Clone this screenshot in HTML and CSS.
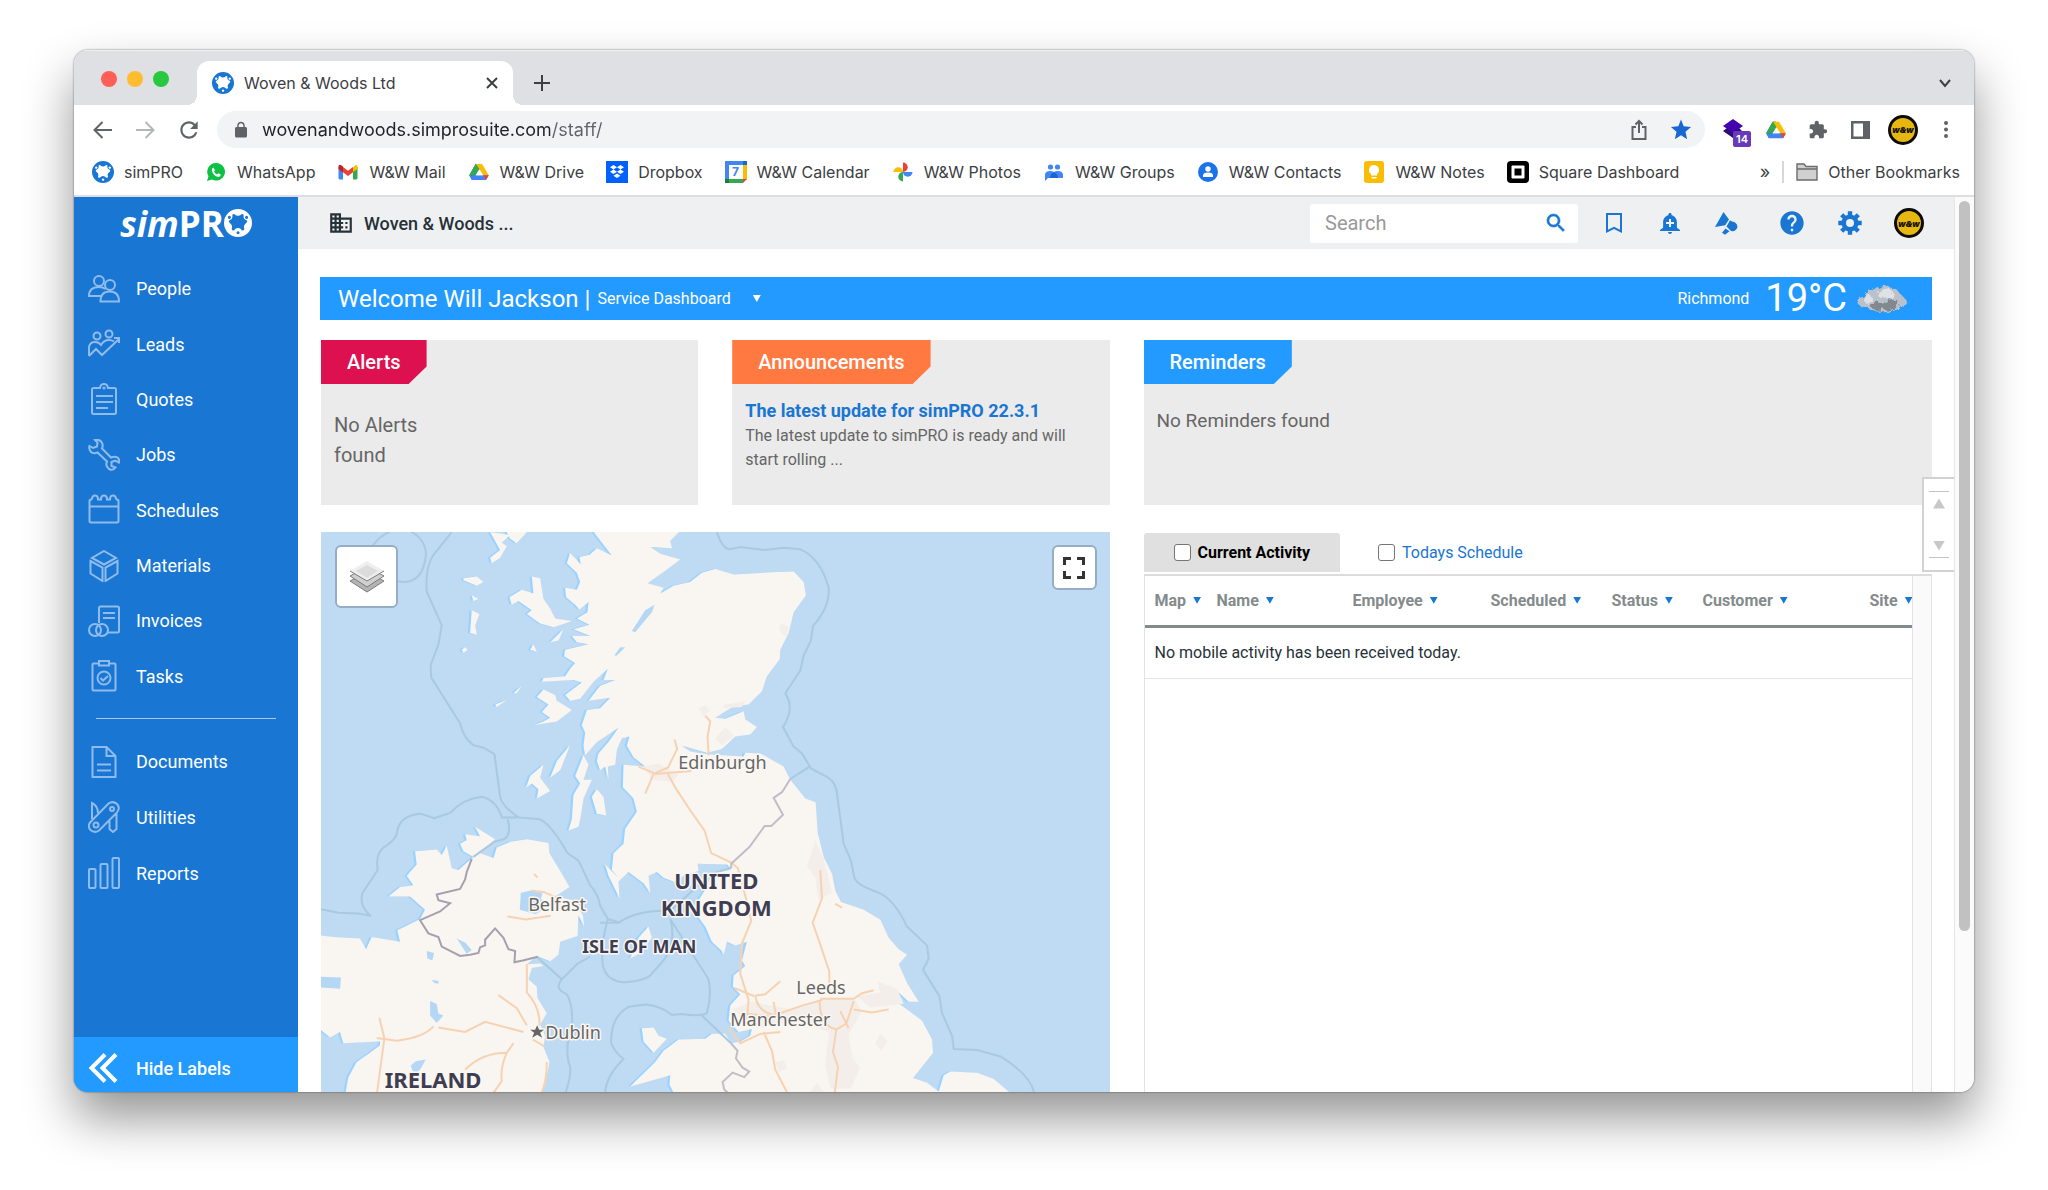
FILE: index.html
```
<!DOCTYPE html>
<html lang="en">
<head>
<meta charset="utf-8">
<title>Woven &amp; Woods Ltd</title>
<link rel="stylesheet" href="styles.css">
</head>
<body>
<svg class="defs" aria-hidden="true">
  <symbol id="ring" viewBox="0 0 22 22">
    <path fill="currentColor" fill-rule="evenodd" d="M11 0a11 11 0 1 0 0 22a11 11 0 1 0 0-22zM8.200 4.200Q7 3.600 6.600 4.800Q7 8 4.800 8.600Q3.200 9 3.900 10.300L6 12.600Q6.800 14 6 15.800Q6.300 17.300 8 16.600Q9 15 11 15Q13 15 14 16.600Q15.700 17.300 16 15.800Q15.200 14 16 12.600L18.100 10.300Q18.800 9 17.200 8.600Q15 8 15.400 4.800Q15 3.600 13.800 4.200Q11 6.600 8.200 4.200zM4.200 5.400a1.200 1.200 0 1 0 .1 0zM17.700 5.400a1.200 1.200 0 1 0 .1 0zM11 17.400a1.200 1.200 0 1 0 .1 0z"/>
  </symbol>
  <symbol id="drive" viewBox="0 0 22 20">
    <path fill="#188038" d="M7.300 1h3.700l1.800 3.200L5 17.500 3.200 19 .2 13.600z"/>
    <path fill="#34a853" d="M7.300 1H11l2 3.400L7.800 13.600H.2z"/>
    <path fill="#fbbc04" d="M7.800 1h6.600l7.400 12.600h-6z"/>
    <path fill="#4285f4" d="M.2 13.600h21.600L18.800 19H3.200z"/>
    <path fill="#ea4335" d="M15.600 13.600h6.200L18.800 19z"/>
    <path fill="#fff" d="M11 7.400l3.700 6.200H7.300z"/>
  </symbol>
</svg>

<div class="window">
  <header class="tabs">
    <div class="lights"><i class="light red"></i><i class="light amber"></i><i class="light green"></i></div>
    <div class="tab">
      <svg class="i22 brand"><use href="#ring"/></svg>
      <span class="tab-title">Woven &amp; Woods Ltd</span>
      <button class="bare" aria-label="Close tab"><svg class="i16" viewBox="0 0 16 16"><path class="ln" d="M3 3l10 10M13 3L3 13"/></svg></button>
    </div>
    <button class="bare new-tab" aria-label="New tab"><svg class="i18" viewBox="0 0 18 18"><path class="ln" d="M9 1v16M1 9h16"/></svg></button>
    <button class="bare more-tabs" aria-label="Search tabs"><svg class="i16" viewBox="0 0 16 16"><path class="ln" d="M3 5l5 6 5-6"/></svg></button>
  </header>

  <div class="toolbar">
    <button class="bare" aria-label="Back"><svg class="i22" viewBox="0 0 22 22"><path class="ln grey" d="M20 11H3M10.500 3L2.500 11l8 8"/></svg></button>
    <button class="bare" aria-label="Forward"><svg class="i22" viewBox="0 0 22 22"><path class="ln pale" d="M2 11h17M11.500 3l8 8-8 8"/></svg></button>
    <button class="bare" aria-label="Reload"><svg class="i26" viewBox="0 0 24 24"><path fill="#5f6368" d="M17.650 6.350C16.200 4.900 14.210 4 12 4c-4.420 0-7.990 3.580-7.990 8s3.570 8 7.990 8c3.730 0 6.840-2.550 7.730-6h-2.080c-.82 2.330-3.040 4-5.650 4-3.310 0-6-2.690-6-6s2.690-6 6-6c1.660 0 3.140.69 4.220 1.780L13 11h7V4l-2.350 2.350z"/></svg></button>
    <form class="omnibox">
      <svg class="i18" viewBox="0 0 24 24"><path fill="#5f6368" fill-rule="evenodd" d="M18 8h-1V6c0-2.760-2.240-5-5-5S7 3.240 7 6v2H6c-1.100 0-2 .9-2 2v10c0 1.100.9 2 2 2h12c1.100 0 2-.9 2-2V10c0-1.100-.9-2-2-2zM8.900 8V6c0-1.710 1.390-3.100 3.100-3.100s3.100 1.390 3.100 3.100v2H8.900z"/></svg>
      <input class="url" type="text" aria-label="Address" value="wovenandwoods.simprosuite.com/staff/">
      <button class="bare" type="button" aria-label="Share"><svg class="i22" viewBox="0 0 22 22"><path class="ln grey" d="M8 8H4.500v12h13V8H14M11 14V2.500M7.500 5.500L11 2l3.500 3.500"/></svg></button>
      <button class="bare" type="button" aria-label="Bookmark"><svg class="i22" viewBox="0 0 24 24"><path fill="#1967d2" d="M12 17.800L18.700 22l-1.800-8L23 8.700l-8.100-.7L12 .6 9.100 8 1 8.700 7.100 14l-1.800 8z"/></svg></button>
    </form>
    <div class="extensions">
      <button class="bare ext" aria-label="Layers extension"><svg class="i22" viewBox="0 0 22 22"><path fill="#2f0a78" d="M1 12l4-3 6 4 6-4 3 3-9 7z"/><path fill="#4305ad" d="M11 0l10 7-10 7L1 7z"/></svg><span class="count">14</span></button>
      <button class="bare" aria-label="Drive extension"><svg class="i20"><use href="#drive"/></svg></button>
      <button class="bare" aria-label="Extensions"><svg class="i20" viewBox="0 0 24 24"><path fill="#5f6368" d="M20.500 11H19V7c0-1.100-.9-2-2-2h-4V3.500C13 2.120 11.880 1 10.500 1S8 2.120 8 3.500V5H4c-1.100 0-1.990.9-1.990 2v3.800H3.500c1.490 0 2.700 1.210 2.700 2.700s-1.210 2.700-2.700 2.700H2V20c0 1.100.9 2 2 2h3.800v-1.500c0-1.490 1.210-2.700 2.700-2.700s2.700 1.210 2.700 2.700V22H17c1.100 0 2-.9 2-2v-4h1.500c1.380 0 2.500-1.120 2.500-2.500S21.880 11 20.500 11z"/></svg></button>
      <button class="bare" aria-label="Side panel"><svg class="i20" viewBox="0 0 20 20"><path fill="#5f6368" fill-rule="evenodd" d="M1 1h19v18H1zM3.500 3.500v13H13v-13z"/></svg></button>
      <button class="avatar" aria-label="Profile">w&amp;w</button>
      <button class="bare" aria-label="Menu"><svg class="i20" viewBox="0 0 20 20"><g fill="#5f6368"><circle cx="10" cy="3" r="2"/><circle cx="10" cy="9.500" r="2"/><circle cx="10" cy="16" r="2"/></g></svg></button>
    </div>
  </div>

  <nav class="bookmarks" aria-label="Bookmarks">
    <a href="#"><svg class="i22 brand"><use href="#ring"/></svg>simPRO</a>
    <a href="#"><svg class="i22" viewBox="0 0 22 22"><path fill="#0cc143" d="M11.300 2a8.800 8.800 0 1 1-4.400 16.500L2 20l1.500-4.700A8.800 8.800 0 0 1 11.300 2z"/><path fill="#fff" d="M8.500 6.500l1.500 2.800-1 1.300q1 2 3 2.900l1.200-1.200 2.600 1.300q0 2.200-2.400 2.300Q8 15.300 6.800 9.300 6.700 7 8.500 6.500z"/></svg>WhatsApp</a>
    <a href="#"><svg class="i22" viewBox="0 0 22 22"><path fill="#4285f4" d="M1.500 6L6 9v9.500H3q-1.500 0-1.500-1.500z"/><path fill="#34a853" d="M16 9l4.500-3v11q0 1.500-1.500 1.500h-3z"/><path fill="#fbbc04" d="M16 6.500Q20.500 2 20.500 6v2L16 11z"/><path fill="#ea4335" d="M6 6l5 3.800L16 6v5.300l-5 3.800-5-3.800z"/><path fill="#c5221f" d="M1.500 6q0-4 4.500-.5v6L1.500 8z"/></svg>W&amp;W Mail</a>
    <a href="#"><svg class="i22" viewBox="0 0 22 22"><use href="#drive" x="1" y="2" width="20" height="18"/></svg>W&amp;W Drive</a>
    <a href="#"><svg class="i22" viewBox="0 0 22 22"><path fill="#0061fe" d="M0 0h22v22H0z"/><path fill="#fff" d="M7.500 4L11 6.200 7.500 8.500 4 6.200zM14.500 4L18 6.200l-3.500 2.300L11 6.200zM7.500 8.500l3.500 2.300L7.500 13 4 10.800zM14.500 8.500l3.500 2.300-3.500 2.200-3.500-2.200zM11 12.500l3.500 2.200L11 17l-3.500-2.300z"/></svg>Dropbox</a>
    <a href="#"><span class="day"><svg class="i22" viewBox="0 0 22 22"><path fill="#fff" d="M4 4h14v14H4z"/><path fill="#4285f4" d="M0 0h18v4H4v14H0z"/><path fill="#1967d2" d="M18 0h4v4h-4z"/><path fill="#fbbc04" d="M18 4h4v14h-4z"/><path fill="#34a853" d="M4 18h14v4H4z"/><path fill="#188038" d="M0 18h4v4H0z"/><path fill="#ea4335" d="M18 18h4l-4 4z"/></svg><b>7</b></span>W&amp;W Calendar</a>
    <a href="#"><svg class="i22" viewBox="0 0 22 22"><path fill="#ea4335" d="M11 1.500a4.700 4.700 0 0 1 0 9.500z"/><path fill="#4285f4" d="M20.500 11a4.700 4.700 0 0 1-9.500 0z"/><path fill="#34a853" d="M11 20.500A4.700 4.700 0 0 1 11 11z"/><path fill="#fbbc04" d="M1.500 11A4.700 4.700 0 0 1 11 11z"/></svg>W&amp;W Photos</a>
    <a href="#"><svg class="i22" viewBox="0 0 22 22"><g fill="#4285f4"><circle cx="7.500" cy="6" r="2.600"/><circle cx="14.500" cy="6" r="2.600"/><path d="M2 20v-6q0-4 5.500-4 2 0 3.500 1 1.500-1 3.500-1 5.500 0 5.500 4v3H5z"/></g><path fill="#1967d2" d="M7 17q0-4 4-6 4 2 4 6z"/></svg>W&amp;W Groups</a>
    <a href="#"><svg class="i22" viewBox="0 0 22 22"><circle cx="11" cy="11" r="10" fill="#1a73e8"/><circle cx="11" cy="8" r="2.700" fill="#fff"/><path fill="#fff" d="M6 16v-1.500q0-3 5-3t5 3V16z"/></svg>W&amp;W Contacts</a>
    <a href="#"><svg class="i22" viewBox="0 0 22 22"><rect x="1" width="20" height="22" rx="3" fill="#fbbc04"/><path fill="#fff" d="M11 4a5 5 0 0 1 3 9v1.500H8V13a5 5 0 0 1 3-9zM8.500 16h5v1.500h-5z"/></svg>W&amp;W Notes</a>
    <a href="#"><svg class="i22" viewBox="0 0 22 22"><rect width="22" height="22" rx="4"/><rect x="4.500" y="4.500" width="13" height="13" rx="1" fill="#fff"/><rect x="7.500" y="7.500" width="7" height="7"/></svg>Square Dashboard</a>
    <button class="bare overflow" aria-label="More bookmarks">»</button>
    <a class="other" href="#"><svg class="i22" viewBox="0 0 22 20"><path fill="#d0d0d0" stroke="#6b6b6b" stroke-width="1.400" d="M1 18V2h7l2 2.500h11V18zM1 7h20"/></svg>Other Bookmarks</a>
  </nav>

  <div class="page">
    <aside class="sidebar">
      <a class="logo" href="#"><em>sim</em>PR<svg class="i28"><use href="#ring"/></svg></a>
      <nav aria-label="Main">
        <ul class="menu first">
          <li><a href="#"><svg viewBox="0 0 32 32"><circle cx="11" cy="8" r="5"/><circle cx="22" cy="12" r="5"/><path d="M13 23H1q0-9 10-9 4 0 6.500 2M12.500 28.500h18.500q0-10-9.500-10-9 0-9 10z"/></svg>People</a></li>
          <li><a href="#"><svg viewBox="0 0 32 32"><circle cx="9" cy="8" r="3.500"/><circle cx="21" cy="6" r="3.500"/><path d="M1 28V19q1-5 6-5 4 0 6 3 3-5 8-5 3 0 5 1.500M1 28l7-7 6 6 17-16M26 10h5v5"/></svg>Leads</a></li>
          <li><a href="#"><svg viewBox="0 0 32 32"><path d="M12 5H5.500Q4 5 4 6.500v23Q4 31 5.500 31h21q1.500 0 1.500-1.500v-23Q28 5 26.500 5H20q-.5-4-4-4t-4 4zM8 13h17M8 19h17M8 25h12"/><circle cx="16" cy="5" r=".6"/></svg>Quotes</a></li>
          <li><a href="#"><svg viewBox="0 0 32 32"><path d="M7 1q4-1 6.500 2 2 3 .5 6.500l9 9q4-1.500 6.500 0 2.500 2.500 1.500 5l-4-2-3.500 1.500V27l4 1.500q-2.500 3.500-6.500 1.500-4-3-2-7.500l-9.500-9q-4 1.500-6.500-.5-2.500-3-1.500-6L5 9l4-1.500.5-4z"/></svg>Jobs</a></li>
          <li><a href="#"><svg viewBox="0 0 32 32"><path d="M1.500 12.500h29M4 5.500H3Q1.500 5.500 1.500 7v20q0 1.500 1.500 1.500h26q1.500 0 1.500-1.500V7q0-1.500-1.500-1.500h-1M4 5.500q0-4 3-4t3 4h3q0-4 3-4t3 4h3q0-4 3-4t3 4"/></svg>Schedules</a></li>
          <li><a href="#"><svg viewBox="0 0 32 32"><path d="M16 1l12 7-12 6.500L4 8zM2.500 11L14.500 17.500V31L2.500 23.500zM29.500 11L17.500 17.500V31l12-7.500z"/></svg>Materials</a></li>
          <li><a href="#"><svg viewBox="0 0 32 32"><path d="M11 18V3q0-1.500 1.500-1.500h17Q31 1.500 31 3v23q0 1.500-1.500 1.500H19M15 8h12M15 13h12"/><circle cx="7" cy="25" r="6"/><circle cx="14" cy="25" r="6"/></svg>Invoices</a></li>
          <li><a href="#"><svg viewBox="0 0 32 32"><path d="M11 3.500H5.500Q4.500 3.500 4.500 4.500v25q0 1 1 1h21q1 0 1-1v-25q0-1-1-1H21M11 1h10v4.500H11zM12.500 18l2.500 2.500 5-4.500"/><circle cx="16" cy="18" r="6.500"/></svg>Tasks</a></li>
        </ul>
        <hr>
        <ul class="menu second">
          <li><a href="#"><svg viewBox="0 0 32 32"><path d="M18.500 1H4.500v30h23V10zM18.500 1v9h9M9 18.500h14M9 24.500h14"/></svg>Documents</a></li>
          <li><a href="#"><svg viewBox="0 0 32 32"><path d="M2.500 21L20.500 2.500q4.500-3 8.500.5 3.500 4 0 8.500L11 29.500q-4.500 3-8.500-.5-3.500-4 0-8zM4 18V2q6 3 6 10M21.500 20v8l3.500 3 3.500-3V13"/><circle cx="24" cy="8" r="2"/><circle cx="8" cy="24" r="2.500"/></svg>Utilities</a></li>
          <li><a href="#"><svg viewBox="0 0 32 32"><rect x="1" y="12" width="6.500" height="19" rx="1"/><rect x="12.500" y="7" width="7" height="24" rx="1"/><rect x="24.500" y="1" width="6.500" height="30" rx="1"/></svg>Reports</a></li>
        </ul>
      </nav>
      <button class="hide-labels"><svg viewBox="0 0 32 32"><path d="M17 2.500L3.500 16 17 29.500M28 2.500L14.500 16 28 29.500"/></svg>Hide Labels</button>
    </aside>

    <div class="content">
      <header class="topbar">
        <a class="company" href="#"><svg class="i26" viewBox="0 0 24 24"><path fill="#263238" d="M12 7V3H2v18h20V7H12zM6 19H4v-2h2v2zm0-4H4v-2h2v2zm0-4H4V9h2v2zm0-4H4V5h2v2zm4 12H8v-2h2v2zm0-4H8v-2h2v2zm0-4H8V9h2v2zm0-4H8V5h2v2zm10 12h-8v-2h2v-2h-2v-2h2v-2h-2V9h8v10zm-2-8h-2v2h2v-2zm0 4h-2v2h2v-2z"/></svg>Woven &amp; Woods ...</a>
        <form class="search">
          <input type="search" placeholder="Search" aria-label="Search">
          <button class="bare" type="button" aria-label="Search"><svg class="i24" viewBox="0 0 24 24"><path fill="#1976d2" stroke="#1976d2" stroke-width=".6" d="M15.500 14h-.79l-.28-.27C15.410 12.590 16 11.110 16 9.500 16 5.910 13.090 3 9.500 3S3 5.910 3 9.500 5.910 16 9.500 16c1.610 0 3.090-.59 4.230-1.570l.27.28v.79l5 4.990L20.490 19l-4.990-5zm-6 0C7.010 14 5 11.990 5 9.500S7.010 5 9.500 5 14 7.010 14 9.500 11.990 14 9.500 14z"/></svg></button>
        </form>
        <div class="actions">
          <div class="tools">
            <button class="bare" aria-label="Bookmarks"><svg class="i24" viewBox="0 0 24 24"><path fill="#1976d2" d="M4 2h16v20l-8-4-8 4zM6 4v14.800l6-3 6 3V4z"/></svg></button>
            <button class="bare" aria-label="Notifications"><svg class="i24" viewBox="0 0 24 24"><path fill="#1976d2" d="M10.010 21.010c0 1.100.89 1.990 1.990 1.990s1.990-.89 1.990-1.990h-3.980zm8.870-4.190V11c0-3.250-2.250-5.970-5.290-6.690v-.72C13.590 2.710 12.880 2 12 2s-1.590.71-1.590 1.590v.72C7.370 5.030 5.120 7.750 5.120 11v5.820L2 18.940V20h20v-1.060l-3.120-2.120zM16 13.010h-3v3h-2v-3H8V11h3V8h2v3h3v2.010z"/></svg></button>
            <button class="bare" aria-label="Announcements"><svg class="i24" viewBox="0 0 24 24"><path fill="#1976d2" d="M9.500 1l5.500 7.500-3.800 5.800L1 16zM16 9.200l2 1.300q5 .5 5.500 5.500-1.500 5-6.500 4l-4.500-4.500zM11.500 17.500l4 2.800-4.500 3.500-3-2z"/></svg></button>
          </div>
          <button class="bare" aria-label="Help"><svg class="i28" viewBox="0 0 24 24"><path fill="#1976d2" d="M12 2C6.480 2 2 6.480 2 12s4.480 10 10 10 10-4.480 10-10S17.520 2 12 2zm1 17h-2v-2h2v2zm2.070-7.750l-.9.920C13.450 12.900 13 13.500 13 15h-2v-.5c0-1.100.45-2.100 1.170-2.830l1.240-1.260c.37-.36.59-.86.59-1.410 0-1.100-.9-2-2-2s-2 .9-2 2H8c0-2.210 1.790-4 4-4s4 1.790 4 4c0 .88-.36 1.680-.93 2.250z"/></svg></button>
          <button class="bare" aria-label="Settings"><svg class="i24" viewBox="0 0 24 24"><g fill="none" stroke="#1976d2"><circle cx="12" cy="12" r="6.300" stroke-width="4.600"/><path stroke-width="4.400" d="M12 .3V5M12 19v4.700M.3 12H5M19 12h4.700M3.700 3.700L7 7M17 17l3.300 3.300M3.700 20.300L7 17M17 7l3.300-3.300"/></g></svg></button>
          <button class="avatar" aria-label="Account">w&amp;w</button>
        </div>
      </header>

      <main>
        <section class="banner">
          <h1>Welcome Will Jackson |</h1>
          <button class="bare picker">Service Dashboard <i class="tri"></i></button>
          <span class="town">Richmond</span>
          <span class="temp">19°C</span>
          <svg class="cloud" viewBox="0 0 54 32"><defs><filter id="soft"><feTurbulence type="fractalNoise" baseFrequency=".16" numOctaves="3" seed="4"/><feDisplacementMap in="SourceGraphic" scale="9"/></filter></defs><g filter="url(#soft)"><path fill="#b9c1ca" d="M4 22Q-1 15 8 12q3-5 10-5Q28-2 38 4q7 2 9 7 8 5 3 11-2 6-10 5-9 5-18 1-8 0-9-4-7 1-9-2z"/><path fill="#dfe1e4" d="M24 9q6-6 14-2 4 4 0 8l-12 1zM7 15q4-5 10-2l2 6-9 1z"/><path fill="#83888f" d="M15 24q8-6 14-3 8-7 15-4 4 5-4 8-9 3-18 2z"/></g></svg>
        </section>

        <div class="halves">
          <div class="pair">
            <section class="card alerts">
              <h2 class="tag">Alerts</h2>
              <p class="empty">No Alerts<br>found</p>
            </section>
            <section class="card news">
              <h2 class="tag">Announcements</h2>
              <h3><a href="#">The latest update for simPRO 22.3.1</a></h3>
              <p>The latest update to simPRO is ready and will start rolling ...</p>
            </section>
          </div>
          <section class="card reminders">
            <h2 class="tag">Reminders</h2>
            <p class="empty">No Reminders found</p>
          </section>

          <section class="map" aria-label="Map">
            <svg class="chart" viewBox="0 0 788 560" preserveAspectRatio="xMinYMin slice">
              <g transform="translate(-11 -12) scale(.33333 .37622)">
                <use class="shelf" href="#coast" x="-7"/>
                <g id="coast">
                  <path class="land" d="M840 20L905 94 860 75 838 92 808 98 812 118 780 88 770 115 800 140 810 165 800 185 765 180 768 205 795 225 808 238 835 218 832 245 800 262 838 278 790 290 840 308 785 308 800 325 835 330 765 345 762 362 795 380 780 395 765 415 700 420 695 430 790 425 815 432 765 465 780 480 810 475 850 430 893 395 880 425 915 425 870 440 835 480 900 472 870 500 830 505 815 545 825 565 820 600 825 625 860 590 925 552 895 590 865 620 860 640 870 665 885 655 895 690 893 655 915 650 920 610 935 580 958 575 950 600 970 630 1005 655 940 650 938 710 970 740 980 775 945 820 940 860 910 885 905 930 925 950 885 915 895 945 928 1005 925 960 955 935 1000 965 1020 990 1015 945 1040 935 1060 950 1095 962 1120 945 1165 932 1162 913 1250 915 1262 925 1205 935 1190 975 1165 1010 1160 1050 1185 1080 1205 1120 1235 1145 1240 1155 1250 1120 1275 1130 1310 1120 1295 1170 1305 1185 1270 1210 1268 1240 1290 1260 1260 1290 1255 1330 1285 1360 1325 1352 1320 1370 1290 1385 1262 1390 1245 1365 1205 1365 1185 1378 1105 1380 1060 1410 1035 1440 960 1505 1020 1490 1080 1475 1078 1500 1095 1530 2110 1530 2050 1485 2000 1468 1920 1465 1900 1475 1885 1518 1850 1495 1808 1482 1868 1415 1865 1380 1835 1330 1790 1300 1750 1275 1690 1265 1735 1262 1765 1255 1795 1280 1825 1280 1790 1230 1765 1180 1790 1155 1765 1140 1735 1110 1710 1062 1660 1035 1592 1015 1575 985 1565 940 1540 895 1522 830 1516 750 1485 740 1440 690 1420 655 1350 620 1305 618 1300 628 1190 622 1140 615 1115 600 1190 618 1235 608 1275 575 1320 570 1340 550 1305 530 1300 508 1245 528 1215 525 1270 495 1315 490 1355 455 1370 415 1408 370 1410 345 1435 300 1450 245 1487 200 1480 165 1450 137 1400 138 1270 145 1215 130 1175 140 1140 165 1090 175 1050 195 1060 180 1012 168 1065 135 1110 105 1050 90 1020 72 1085 75 1080 55 1120 20z"/>
                  <path class="land" d="M20 1102L70 1108 150 1112 168 1140 185 1108 270 1120 262 1090 330 1060 345 1035 300 1000 235 1000 270 975 310 970 290 945 320 915 315 880 380 875 395 890 410 865 425 925 445 930 490 895 460 880 450 860 470 850 465 835 510 840 495 815 555 848 510 885 550 898 560 870 600 855 650 848 715 858 718 885 755 940 778 975 735 1000 790 1010 818 1050 822 1080 805 1050 802 1105 750 1120 745 1155 720 1172 680 1158 650 1180 690 1178 700 1185 665 1190 655 1220 680 1240 682 1270 710 1310 690 1340 705 1370 700 1400 718 1440 705 1500 690 1530 105 1530 115 1480 140 1440 180 1415 210 1395 210 1385 100 1390 90 1360 60 1375 20 1345z"/>
                  <path class="land" d="M540 32L600 40 575 60 590 70 570 100 545 115 540 100 570 80zM590 32L650 32 620 62 600 50zM460 155L500 150 520 165 500 175 460 160zM485 200L505 210 490 215zM485 240L508 250 495 280 500 305 480 300zM455 345L465 338 473 345 460 353zM660 345L670 330 680 350zM555 490L590 478 560 497zM610 460L635 440 620 460zM665 150L690 155 700 210 720 235 735 262 785 268 730 285 690 275 650 250 665 240 625 215 605 225 598 205 635 185 670 195zM720 325L760 290 745 320zM680 470L700 450 735 465 740 480 785 505 740 535 670 545 700 535 720 525 695 510 715 490zM720 685L740 640 780 598 750 665zM648 710L660 680 700 650 690 685 720 720 680 740 685 715 665 700zM795 680L820 625 835 650 820 690 845 690 820 740 810 795 805 815 775 825 785 795 790 730 810 700zM845 735L860 715 880 735 888 785 860 780zM960 1165L985 1110 1015 1080 1025 1110 990 1150zM995 1350L1030 1348 1045 1370 1070 1378 1030 1415 1000 1385z"/>
                </g>
                <path class="urban" d="M1165 500l20-8 15 15-20 14zM1245 490l60-8-10 15-60 3zM1215 580l30-30 25 22-35 28zM1000 655l45-8 60 30-20 18-60-5zM1410 275l25 8-8 30-20-20zM1515 850l25 50 25 90-40 20-10-60-25-30zM1265 1300l60-20 120 20 100-30 90 5 20 30-40 60 10 60 25 30-30 55h-60l-15-60 10-90-90-30-120 20zM1640 1265l70-10-10-30 60 20 20 40-100 10zM1695 1390l15-25 22 20-20 25zM1395 1440l25-5 10 20-25 12zM1500 1520l20-25 20 25z"/>
                <path class="water" d="M965 295L1005 240 1033 225 1025 245 975 298zM912 360L930 338 945 338 920 360zM632 990l40-8 25 10-5 15 25 15-40 25-48-12zM440 1112l25 10 20 20-15 10zM350 1145l22 5-5 20-15-5zM360 1278l20 8 5 25 15 5-20 20-20-20zM365 1222l20 2 0 8-12-2zM302 1450l15-12 30-5-15 25-15 12-10-8zM33 1213l60 2-3 30-57-3z"/>
                <g class="zone"><path d="M185 72Q215 32 275 20Q345 40 348 90Q340 165 280 165L258 162M425 32L368 95Q345 130 350 190L395 280 385 330 362 385 363 418 450 540Q460 580 490 598L520 605 553 622 570 735Q575 760 625 790L690 795Q725 810 772 885L805 905 840 970Q865 995 870 1025L893 1060 930 1070 870 1070M33 1034L85 1043 145 1045 183 1052Q145 1025 158 990L203 930Q195 890 220 870 260 850 262 825 270 785 330 780L372 792 420 778Q460 740 515 735 560 745 575 790L620 790M593 795Q605 840 580 848L552 855 490 895M893 1060Q870 1130 878 1185 890 1225 940 1228 1000 1225 1020 1210L1060 1170Q1100 1120 1080 1060L1195 1220Q1205 1260 1190 1310 1170 1320 1115 1312L1085 1315Q1050 1290 1005 1287L955 1293Q900 1320 903 1390 915 1415 940 1432Q885 1480 885 1525M680 1160L755 1220 800 1180 840 1160M755 1220Q730 1245 770 1260 790 1290 785 1345 765 1395 775 1440 790 1460 765 1525M925 1070Q980 1035 1080 1038L1140 990 1200 940 1262 925M1170 1312L1262 1390"/><path d="M1220 32Q1235 75 1258 78L1290 72 1365 80 1420 74 1470 78Q1530 100 1555 180 1560 230 1508 282L1502 320 1480 360 1470 400 1425 460Q1455 500 1418 550L1450 602 1475 620 1502 660 1555 685Q1580 700 1582 740L1600 860 1622 905 1632 950Q1640 970 1700 988 1750 1005 1790 1080L1850 1130 1855 1165 1838 1195 1887 1265 1895 1310 1925 1370 1930 1405 2000 1408 2070 1425Q2170 1480 2172 1530M1440 688L1498 655"/></g>
                <path class="road" d="M1185 520l15 15-8 40 3 50M1093 583l8 25-28 50-40 15-48-18M1030 675l-25 52M1033 675l110-8M1073 675l25 40 45 60 40 50 20 60 60 25 20 15 30 100 10 40-28 60-5 80 25 70-5 50M1530 930l5 75-28 65 20 50 30 80v55M1332 1265l-60-22M1335 1263l30-3 45-35M1335 1265q10 45 60 50l80-25 60-15M1390 1280l8 40M1300 1310l90 10M1255 1350l35 40 60-25 60-5M1360 1360l25 50 10 50 35 60M1530 1272l100 0 25-15 35-8M1630 1300l55 8 50-8M1528 1275q0 70 50 78l30-15 22-60M1578 1353l-10 60 15 40-10 70M1590 1305l25 45M1575 1020l20 10M665 985l35 3 40 15M592 1053l55 8 75-10M672 940l10 10M650 1180v75q40 40 38 85l-12 15M565 1262l55 35 30 45M640 1360l-115-27-60 27-80-12M370 1345q-30 30-110 38l-60-7M208 1322l15 55-22 145M465 1460q50-45 125-45l20-25M590 1415q-20 40-15 75l-25 32M668 1380l35 18M710 1440q0 50-15 80"/>
                <path class="border" d="M485 900l-15 35-5 20-15 25-70 15 5 15 35 8-30 22-60 23 25 35 30 10 10 25 55 25 30-3 25-5 5-15 15-5 0-15 30-30 25 25 15 30 20 5-2 30 25-5 45-10"/>
                <path class="border thin" d="M1440 688l-25 35-25 15 28 45-35 30-20 0-45 55-55 45 0 12M1262 1390l20 20-5 20 20 25 20 10-15 15-35-12-30 25 5 20 25 20"/>
              </g>
              <g class="city">
                <text x="357" y="237">Edinburgh</text><text x="207" y="379">Belfast</text><text x="224" y="507">Dublin</text><text x="475" y="462">Leeds</text><text x="409" y="494">Manchester</text>
                <path d="M216 493l2 4.500h5l-4 3 2 5-5-3-5 3 2-5-4-3h5z"/>
              </g>
              <g class="country"><text x="395" y="357">UNITED</text><text x="395" y="384">KINGDOM</text><text x="112" y="556">IRELAND</text><text class="small" x="318" y="421">ISLE OF MAN</text></g>
            </svg>
            <button class="map-btn layers" aria-label="Layers"><svg viewBox="0 0 36 36"><path fill="#b4b4b4" stroke="#7c7c7c" d="M1 22l17-9 17 9-17 11z"/><path fill="#cfcfcf" stroke="#7c7c7c" d="M1 17l17-9 17 9-17 11z"/><path fill="#efefef" d="M1 12L18 2l17 10-17 10z"/><path fill="#dcdcdc" d="M7 12l11-6 11 6-11 7z"/><path fill="none" stroke="#7c7c7c" d="M1 12l17 10 17-10"/></svg></button>
            <button class="map-btn full" aria-label="Full screen"><svg viewBox="0 0 22 22"><path fill="none" stroke="#333" stroke-width="3" d="M1.500 8V1.500H8M14 1.500h6.500V8M20.500 14v6.500H14M8 20.500H1.500V14"/></svg></button>
          </section>

          <section class="activity">
            <div class="switches">
              <label class="switch on"><input type="checkbox">Current Activity</label>
              <label class="switch"><input type="checkbox">Todays Schedule</label>
            </div>
            <div class="grid">
              <div class="scroller">
                <table>
                  <colgroup><col class="c-map"><col class="c-name"><col class="c-emp"><col class="c-sch"><col class="c-stat"><col class="c-cust"><col></colgroup>
                  <thead><tr>
                    <th scope="col"><button class="bare sort">Map <i class="tri"></i></button></th>
                    <th scope="col"><button class="bare sort">Name <i class="tri"></i></button></th>
                    <th scope="col"><button class="bare sort">Employee <i class="tri"></i></button></th>
                    <th scope="col"><button class="bare sort">Scheduled <i class="tri"></i></button></th>
                    <th scope="col"><button class="bare sort">Status <i class="tri"></i></button></th>
                    <th scope="col"><button class="bare sort">Customer <i class="tri"></i></button></th>
                    <th scope="col"><button class="bare sort">Site <i class="tri"></i></button></th>
                  </tr></thead>
                  <tbody><tr><td colspan="7">No mobile activity has been received today.</td></tr></tbody>
                </table>
              </div>
              <div class="track"></div>
            </div>
          </section>
        </div>
      </main>
    </div>
    <div class="scrollbar"><i></i></div>
    <div class="jump">
      <button class="bare" aria-label="Scroll up"><i class="tri up"></i></button>
      <button class="bare" aria-label="Scroll down"><i class="tri"></i></button>
    </div>
  </div>
</div>
</body>
</html>
```
FILE: styles.css
```
* { box-sizing: border-box; }
body { margin: 0; min-height: 100vh; padding: 50px 74px 98px; background: #fff; font: 16px Roboto, sans-serif; color: #212121; overflow: hidden; }
a { color: inherit; text-decoration: none; }
h1, h2, h3, p, ul { margin: 0; padding: 0; font-weight: 400; }
button, input { font: inherit; }
svg { display: block; flex: none; }
.defs { position: absolute; width: 0; height: 0; }
.bare { padding: 0; border: 0; background: none; color: inherit; display: flex; align-items: center; }
.i16 { width: 16px; height: 16px; } .i18 { width: 18px; height: 18px; } .i20 { width: 20px; height: 20px; }
.i22 { width: 22px; height: 22px; } .i24 { width: 24px; height: 24px; } .i26 { width: 26px; height: 26px; } .i28 { width: 28px; height: 28px; }
.ln { fill: none; stroke: #3c4043; stroke-width: 2; }
.ln.grey { stroke: #5f6368; } .ln.pale { stroke: #b4b7ba; }
.brand { color: #1976d2; }
.tri { display: inline-block; width: 8px; height: 7px; background: #1976d2; clip-path: polygon(0 0, 100% 0, 50% 100%); }

.window { display: flex; flex-direction: column; height: calc(100vh - 148px); border-radius: 14px; overflow: hidden; background: #fff; box-shadow: 0 26px 50px rgba(0, 0, 0, .42), 0 0 2px rgba(0, 0, 0, .6); }

/* Browser chrome */
.tabs, .toolbar, .bookmarks { font-family: Inter, sans-serif; color: #3c4043; flex: none; }
.tabs { display: flex; align-items: flex-end; height: 55px; padding: 0 21px 0 27px; background: #dee0e4; box-shadow: inset 0 1px #eff0f1; }
.lights { display: flex; gap: 10px; width: 96px; padding-bottom: 18px; }
.light { width: 16px; height: 16px; border-radius: 50%; }
.red { background: #ff5f57; } .amber { background: #febc2e; } .green { background: #28c840; }
.tab { position: relative; display: flex; align-items: center; gap: 10px; width: 316px; height: 44px; padding: 0 13px 0 15px; border-radius: 12px 12px 0 0; background: #fff; }
.tab::before, .tab::after { content: ""; position: absolute; bottom: 0; width: 10px; height: 10px; }
.tab::before { left: -10px; background: radial-gradient(circle at 0 0, transparent 10px, #fff 10px); }
.tab::after { right: -10px; background: radial-gradient(circle at 100% 0, transparent 10px, #fff 10px); }
.tab-title { flex: 1; }
.new-tab { margin-left: 20px; height: 44px; }
.more-tabs { margin-left: auto; height: 44px; }
.toolbar { display: flex; align-items: center; gap: 20px; height: 49px; padding: 0 18px; }
.omnibox { flex: 1; display: flex; align-items: center; gap: 20px; height: 37px; margin-left: -5px; padding: 0 13px 0 15px; border-radius: 19px; background: #f1f3f4; }
.omnibox > svg { margin-right: -8px; }
.url { flex: 1; min-width: 0; padding: 0; border: 0; font-size: 18px; color: transparent; background: linear-gradient(90deg, #202124 288px, #5f6368 288px); background-clip: text; -webkit-background-clip: text; }
.extensions { display: flex; align-items: center; gap: 22px; margin-left: -3px; }
.extensions .avatar { margin: 0 -4px; }
.ext { position: relative; }
.count { position: absolute; left: 11px; top: 12px; padding: 0 3px; border-radius: 2px; background: #673ab7; color: #fff; font-size: 11px; line-height: 16px; font-weight: 600; }
.avatar { width: 30px; height: 30px; padding: 0; border: 3px solid #0c0b06; border-radius: 50%; background: #e6b711; color: #181200; font: italic 900 9px "Open Sans", sans-serif; }
.bookmarks { display: flex; align-items: center; gap: 22px; height: 41px; padding: 0 14px 6px 18px; white-space: nowrap; }
.bookmarks a { display: flex; align-items: center; gap: 10px; }
.day { position: relative; }
.day b { position: absolute; inset: 0; font-size: 12px; line-height: 22px; text-align: center; color: #4285f4; }
.overflow { margin-left: auto; font-size: 18px; }
.bookmarks .other { border-left: 2px solid #d5d7da; padding-left: 12px; margin-left: -10px; }

/* Application frame */
.page { position: relative; flex: 1; min-height: 0; display: flex; border-top: 2px solid #dcdee1; }
.sidebar { display: flex; flex-direction: column; width: 224px; flex: none; background: #1976d2; color: #fff; font-size: 18px; font-weight: 500; }
.logo { display: flex; align-items: center; justify-content: center; height: 52px; font: 700 35px "Open Sans", sans-serif; }
.sidebar nav { flex: 1; }
.menu { list-style: none; display: grid; grid-auto-rows: 1fr; }
.first { height: 443px; margin-top: 12px; }
.second { height: 167px; }
.menu a, .hide-labels { display: flex; align-items: center; gap: 16px; height: 100%; padding-left: 14px; }
.menu svg, .hide-labels svg { width: 32px; height: 32px; fill: none; stroke: #8fbcec; stroke-width: 2; }
.sidebar hr { height: 1px; margin: 14px 22px 15px; border: 0; background: #a7caf0; }
.hide-labels { height: 55px; padding-top: 8px; border: 0; background: #229aff; color: #fff; }
.hide-labels svg { stroke: #fff; stroke-width: 4; }
.content { flex: 1; min-width: 0; display: flex; flex-direction: column; }
.topbar { flex: none; display: flex; align-items: center; height: 52px; padding: 0 30px; background: #eff0f2; }
.company { display: flex; align-items: center; gap: 10px; font-size: 18px; font-weight: 500; color: #263238; }
.search { display: flex; align-items: center; width: 268px; height: 39px; margin: 0 24px 0 auto; padding: 0 10px 0 15px; border-radius: 3px; background: #fff; }
.search input { flex: 1; min-width: 0; padding: 0; border: 0; outline: 0; font-size: 20px; }
.search input::placeholder { color: #999; }
.actions, .tools { display: flex; align-items: center; gap: 32px; }
.tools { padding-right: 8px; }
.scrollbar { width: 20px; flex: none; padding: 4px 4px 0; background: #fbfbfb; border-left: 1px solid #e6e6e6; }
.scrollbar i { display: block; width: 11px; height: 730px; border-radius: 6px; background: #c1c1c1; }

main { flex: 1; min-height: 0; display: flex; flex-direction: column; gap: 20px; padding: 28px 22px 0; }
.banner { flex: none; display: flex; align-items: center; height: 43px; padding: 0 25px 0 18px; background: #229aff; color: #fff; }
.banner h1 { font-size: 24px; }
.picker { gap: 22px; margin: 0 auto 0 7px; }
.picker .tri { background: #fff; }
.temp { margin: 0 8px 0 16px; font-size: 38px; line-height: 43px; }
.cloud { width: 52px; height: 32px; }
.halves { flex: 1; min-height: 0; display: grid; grid-template-columns: 1fr 1fr; grid-template-rows: 165px minmax(0, 1fr); gap: 27px 34px; padding-left: 1px; }
.pair { display: grid; grid-template-columns: 1fr 1fr; gap: 34px; }
.card { background: #ebebeb; color: #666; }
.card p, .card h3 { padding: 0 13px; line-height: 24px; }
.tag { width: max-content; padding: 0 26px; font-size: 20px; font-weight: 500; line-height: 44px; color: #fff; clip-path: polygon(0 0, 100% 0, 100% 60%, calc(100% - 18px) 100%, 0 100%); }
.alerts .tag { background: #de1150; } .news .tag { background: #ff7940; } .reminders .tag { background: #229aff; }
.card .empty { padding-top: 26px; font-size: 20px; line-height: 30px; }
.reminders .empty { padding-top: 22px; font-size: 19px; }
.card h3 { padding-top: 14px; font-size: 18px; line-height: 26px; font-weight: 700; color: #1976d2; }

/* Map */
.map { position: relative; overflow: hidden; background: #bfdaf3; }
.chart { position: absolute; inset: 0; width: 100%; height: 100%; }
.chart path { vector-effect: non-scaling-stroke; }
.land { fill: #f9f5f0; }
.shelf { filter: brightness(0) invert(76%) sepia(35%) saturate(900%) hue-rotate(180deg) brightness(1.05); }
.water { fill: #b5d7f6; }
.urban { fill: #f3eeea; }
.zone { fill: none; stroke: #a8cae0; stroke-width: 2; }
.road { fill: none; stroke: #f6d2b2; stroke-width: 2; }
.border { fill: none; stroke: #a5a0ae; stroke-width: 2; }
.border.thin { stroke: #c2bdc7; }
.city, .country { font-family: "Noto Sans", sans-serif; paint-order: stroke; stroke: #faf7f3; stroke-width: 3px; stroke-linejoin: round; }
.city { font-size: 18px; fill: #666; }
.country { font-size: 22px; font-weight: 700; fill: #3f3d52; text-anchor: middle; }
.country .small { font-size: 18px; }
.map-btn { position: absolute; top: 13px; display: grid; place-items: center; padding: 0; border: 2px solid #95aec5; border-radius: 6px; background: #fff; }
.layers { left: 14px; width: 63px; height: 63px; }
.layers svg { width: 36px; height: 36px; }
.full { right: 13px; width: 45px; height: 45px; }
.full svg { width: 22px; height: 22px; }

/* Activity */
.activity { display: flex; flex-direction: column; min-height: 0; color: #263238; }
.switches { display: flex; height: 44px; padding: 1px 0 2px; border-bottom: 2px solid #dcdcdc; }
.switch { display: flex; align-items: center; gap: 7px; padding: 0 30px; color: #1976d2; }
.switch.on { background: #e0e0e0; color: #000; font-weight: 700; border-radius: 3px 3px 0 0; margin-right: 8px; }
.switch input { appearance: none; width: 17px; height: 17px; margin: 0; border: 1px solid #767676; border-radius: 3px; background: #fff; }
.grid { flex: 1; display: flex; border: solid #e3e3e3; border-width: 0 1px; }
.scroller { flex: 1; min-width: 0; overflow: hidden; }
.track { width: 19px; background: #fafafa; border-left: 1px solid #e3e3e3; }
table { width: 100%; table-layout: fixed; border-collapse: collapse; }
.c-map { width: 62px; } .c-name { width: 136px; } .c-emp { width: 138px; } .c-sch { width: 121px; } .c-stat { width: 91px; } .c-cust { width: 167px; }
th, td { padding: 0 0 0 10px; text-align: left; }
th { height: 50px; overflow: hidden; border-bottom: 3px solid #838b8c; }
td { height: 52px; border-bottom: 1px solid #e5e5e5; }
.sort { gap: 7px; font-weight: 700; color: #848b8c; }

/* Quick scroll control over the right edge */
.jump { position: absolute; right: 20px; top: 280px; display: flex; flex-direction: column; align-items: center; justify-content: space-between; width: 32px; height: 95px; padding: 12px 0; border: 2px solid #d2d2d2; border-right: 0; background: #fff; }
.jump .bare { width: 20px; height: 24px; justify-content: center; border-top: 1px solid #c4c4c4; }
.jump .bare:last-child { border-top: 0; border-bottom: 1px solid #c4c4c4; }
.jump .tri { width: 12px; height: 10px; background: #c8c8c8; }
.jump .up { clip-path: polygon(50% 0, 100% 100%, 0 100%); }
```
